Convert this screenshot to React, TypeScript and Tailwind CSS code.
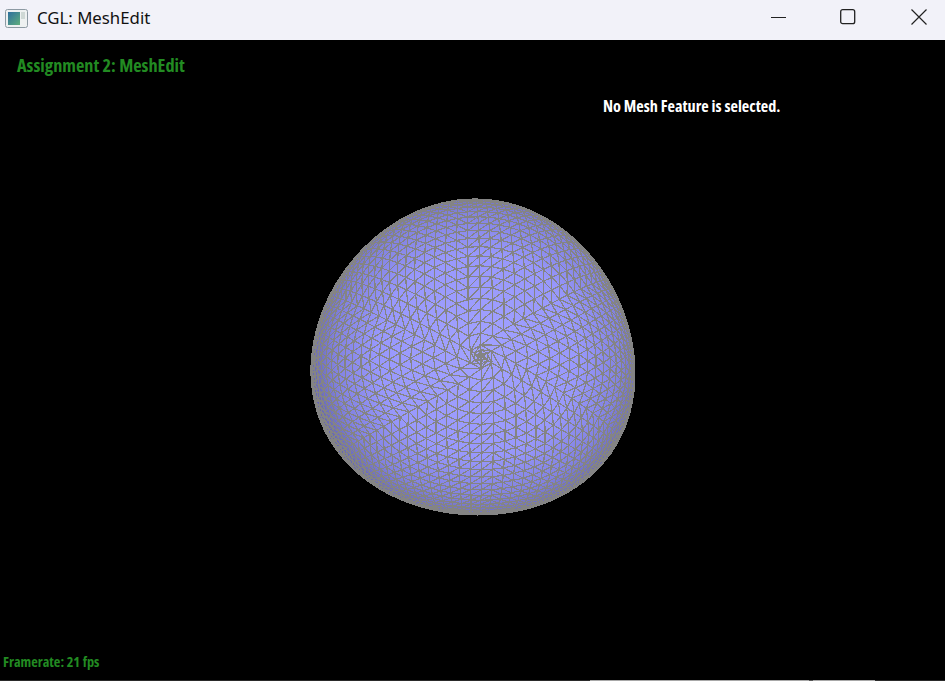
import React, { useMemo } from "react";

// wireframe ball: rings of triangles around the vertex that faces the viewer
type V = [number, number, number];

const STEP = 0.074;
const RING_COUNT = 26;

const ring = (th: number, count: number): V[] =>
  Array.from({ length: count }, (_, i) => {
    const a = Math.PI / 2 + (2 * Math.PI * i) / count;
    return [Math.sin(th) * Math.cos(a), Math.sin(th) * Math.sin(a), Math.cos(th)] as V;
  });

const buildTris = () => {
  // two tiny rings round the pole, the model is denser there
  const rings: V[][] = [ring(0.02, 6), ring(0.045, 6)];
  for (let k = 1; k <= RING_COUNT; k++) rings.push(ring(k * STEP, 6 * k));
  const tris: [V, V, V][] = [];
  const pole: V = [0, 0, 1];
  rings[0].forEach((p, i) => tris.push([pole, p, rings[0][(i + 1) % rings[0].length]]));
  for (let k = 0; k < rings.length - 1; k++) {
    const a = rings[k];
    const b = rings[k + 1];
    let i = 0;
    let j = 0;
    // walk both rings and always step the one that is behind
    while (i < a.length || j < b.length) {
      const nextA = (i + 1) / a.length;
      const nextB = (j + 1) / b.length;
      if (j >= b.length || (i < a.length && nextA < nextB)) {
        tris.push([a[i % a.length], a[(i + 1) % a.length], b[j % b.length]]);
        i++;
      } else {
        tris.push([a[i % a.length], b[(j + 1) % b.length], b[j % b.length]]);
        j++;
      }
    }
  }
  return tris;
};

const MeshSphere = () => {
  const d = useMemo(() => {
    const tx = -0.05;
    const ty = 0.095;
    const tilt = ([x, y, z]: V): V => {
      const y1 = y * Math.cos(ty) - z * Math.sin(ty);
      const z1 = y * Math.sin(ty) + z * Math.cos(ty);
      const x2 = x * Math.cos(tx) - z1 * Math.sin(tx);
      const z2 = x * Math.sin(tx) + z1 * Math.cos(tx);
      return [x2, y1, z2];
    };
    const parts: string[] = [];
    buildTris().forEach((tri) => {
      const p = tri.map(tilt);
      if ((p[0][2] + p[1][2] + p[2][2]) / 3 < 0) return;
      const pts = p.map(([x, y]) => {
        const px = 473 + x * 162 + 1.5 * y + 3.5 * y * y;
        // egg shape: widest part sits below the middle
        const py = 317 + 158 * (y + 0.095 * (1 - y * y));
        return `${px.toFixed(1)} ${py.toFixed(1)}`;
      });
      parts.push(`M${pts[0]}L${pts[1]}L${pts[2]}Z`);
    });
    return parts.join("");
  }, []);

  return (
    <svg width="945" height="641" viewBox="0 0 945 641" className="absolute inset-0">
      <defs>
        <radialGradient id="shade" gradientUnits="userSpaceOnUse" cx="478" cy="315" r="168">
          <stop offset="0" stopColor="#a2a2ff" />
          <stop offset="0.6" stopColor="#9898fc" />
          <stop offset="0.85" stopColor="#8282e0" />
          <stop offset="1" stopColor="#6666b0" />
        </radialGradient>
      </defs>
      <path d={d} fill="url(#shade)" stroke="#848484" strokeWidth="1.2" shapeRendering="crispEdges" />
    </svg>
  );
};

const App = () => {
  return (
    <div className="flex h-[681px] w-[945px] flex-col overflow-hidden bg-black">
      <div className="flex h-10 shrink-0 items-center bg-[#f2f2f9] pb-1 pl-[5px] font-['Noto_Sans',sans-serif] text-[#111111]">
        <svg width="23" height="19" viewBox="0 0 23 19" className="shrink-0">
          <defs>
            <linearGradient id="appIcon" x1="0" y1="0" x2="1" y2="1">
              <stop offset="0" stopColor="#2f6f9e" />
              <stop offset="1" stopColor="#5fae7c" />
            </linearGradient>
          </defs>
          <rect x="0.5" y="0.5" width="22" height="18" rx="2" fill="#eef1f1" stroke="#8d9aa3" />
          <rect x="3" y="3" width="12" height="13" fill="url(#appIcon)" />
          <rect x="16" y="3" width="4" height="7" fill="#cfd8d5" />
        </svg>
        <span className="ml-[9px] text-[16.8px]">CGL: MeshEdit</span>
        <div className="mb-0.5 ml-auto flex items-center">
          <svg width="16" height="16" viewBox="0 0 16 16" className="mr-[53px]">
            <path d="M0 8.5H15" stroke="#222222" strokeWidth="1" />
          </svg>
          <svg width="16" height="16" viewBox="0 0 16 16" className="mr-[55px]">
            <rect x="0.7" y="0.7" width="14" height="14" rx="2" fill="none" stroke="#222222" strokeWidth="1.3" />
          </svg>
          <svg width="16" height="16" viewBox="0 0 16 16" className="mr-[18px]">
            <path d="M0.5 0.5L15.5 15.5M15.5 0.5L0.5 15.5" stroke="#222222" strokeWidth="1.2" />
          </svg>
        </div>
      </div>
      <div className="relative flex-1 font-['Open_Sans',sans-serif] font-bold [font-stretch:75%]">
        <MeshSphere />
        <div className="absolute left-[17px] top-3.5 text-[18.3px] leading-[22px] text-[#228b22]">
          Assignment 2: MeshEdit
        </div>
        <div className="absolute left-[603px] top-14 text-[16.2px] leading-5 text-white">
          No Mesh Feature is selected.
        </div>
        <div className="absolute bottom-2.5 left-[3px] text-[14.3px] leading-[18px] text-[#228b22]">
          Framerate: 21 fps
        </div>
        <div className="absolute inset-x-0 bottom-0 flex h-px bg-[#2a2a2a] pl-[590px]">
          <div className="w-[219px] bg-[#a8a8a8]" />
          <div className="w-1 bg-[#555555]" />
          <div className="w-[62px] bg-[#a8a8a8]" />
        </div>
      </div>
    </div>
  );
};

export default App;
